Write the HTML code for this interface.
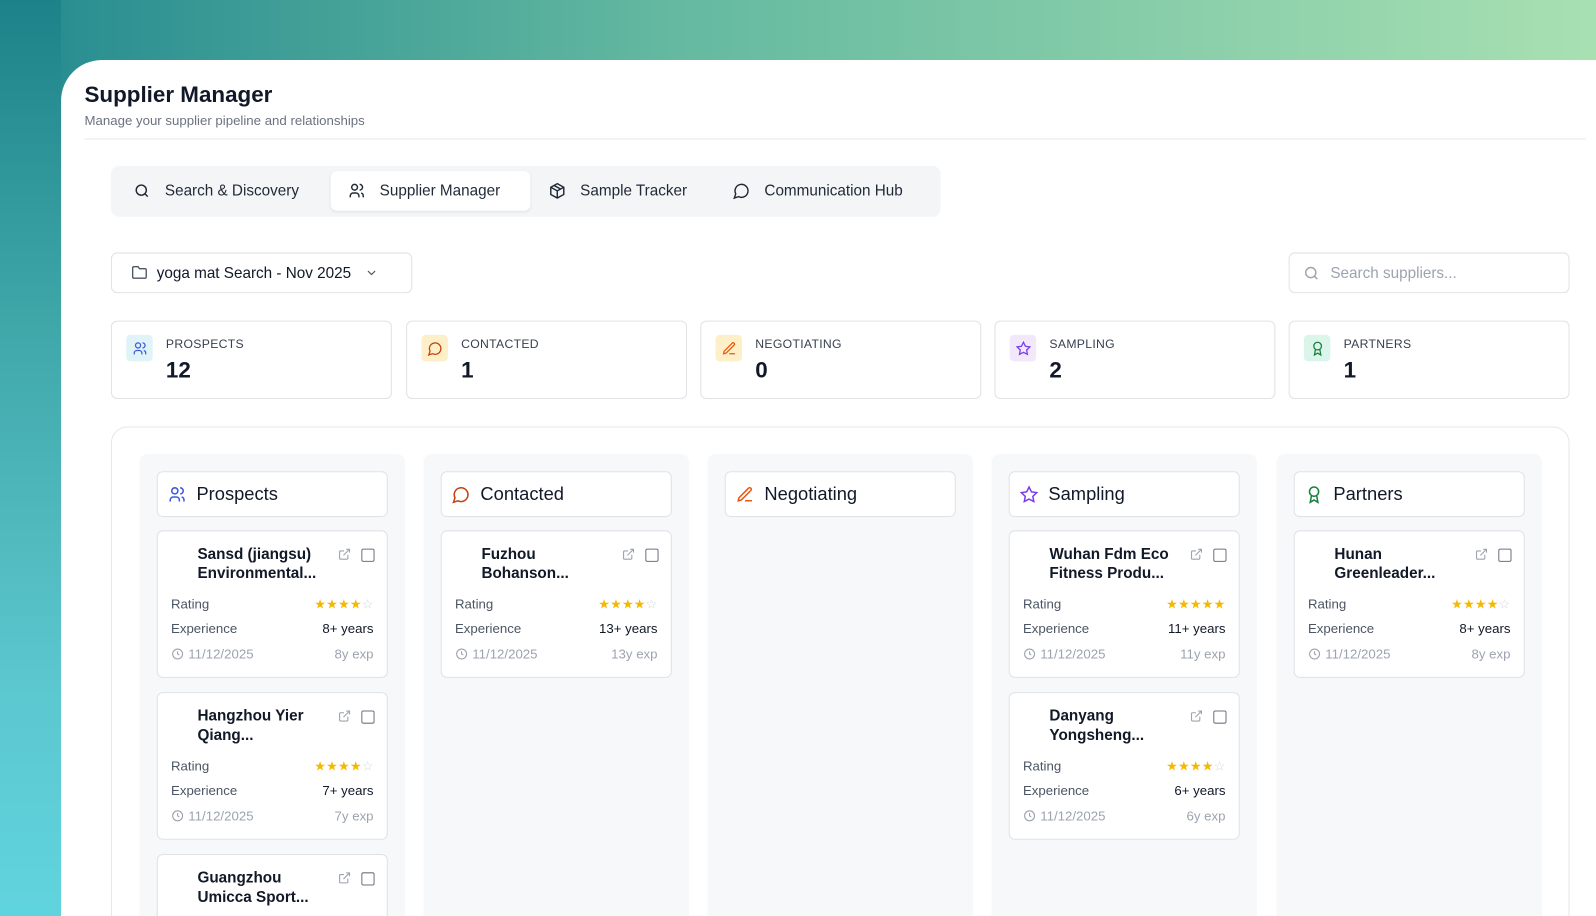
<!DOCTYPE html>
<html style="width:1596px;height:916px;overflow:hidden;background:#3fa7a8"><head><meta charset="utf-8"><style>
*{box-sizing:border-box;margin:0;padding:0}
body{width:1596px;height:916px;overflow:hidden;font-family:"Liberation Sans",sans-serif;color:#111827;
background:linear-gradient(180deg,#1d8289 0%,#3fa7a8 35%,#5cc7cf 75%,#60d4de 100%);position:relative}
#w{position:absolute;left:0;top:0;width:1568px;height:900px;transform:scale(1.01786);transform-origin:0 0}
.topg{position:absolute;left:60px;top:0;width:1508px;height:100px;background:linear-gradient(90deg,#2a8e91 0%,#64b9a0 40%,#a8e0b2 100%)}
.panel{position:absolute;left:60px;top:59px;width:1520px;height:900px;background:#fff;border-top-left-radius:40px}
.abs{position:absolute}
h1{position:absolute;left:83px;top:80px;font-size:22px;font-weight:700;color:#111827}
.sub{left:83px;top:111px;font-size:13px;color:#6b7280}
.div{left:83px;top:136px;width:1475px;height:1px;background:#e5e7eb}
.tabs{left:109px;top:163px;width:815px;height:50px;background:#f4f5f7;border-radius:8px}
.tab{position:absolute;top:5px;height:39px;display:flex;align-items:center;font-size:15px;color:#1f2937;gap:14px}
.tab.act{background:#fff;border-radius:6px;box-shadow:0 1px 3px rgba(0,0,0,.08)}
.box{border:1px solid #e0e2e6;border-radius:6px;background:#fff}
.stat{position:absolute;top:315px;width:276px;height:77px}
.stat .ic{position:absolute;left:14px;top:13px;width:26px;height:26px;border-radius:4px;display:flex;align-items:center;justify-content:center}
.stat .l{position:absolute;left:53px;top:15px;font-size:12px;color:#374151;letter-spacing:.3px}
.stat .n{position:absolute;left:53px;top:35px;font-size:22px;font-weight:700}
.board{left:109px;top:419px;width:1433px;height:520px;border:1px solid #e5e7eb;border-radius:16px}
.col{position:absolute;top:446px;width:261px;height:480px;background:#f7f8fa;border-radius:8px}
.ch{position:absolute;left:17px;top:17px;width:227px;height:45px;display:flex;align-items:center;padding-left:10px;gap:10px;font-size:18px;color:#111827}
.card{position:absolute;left:17px;width:227px;height:145px}
.nm{position:absolute;left:39px;top:13px;font-size:15px;font-weight:700;line-height:19px;width:140px}
.ext{position:absolute;left:177px;top:16px}
.cb{position:absolute;left:200px;top:17px;width:13px;height:13px;border:1.5px solid #6b7280;border-radius:2px}
.row{position:absolute;left:13px;right:13px;display:flex;justify-content:space-between;font-size:13px;color:#4b5563}
.row b{font-weight:400;color:#111827}
.r1{top:64px}.r2{top:88px}.r3{top:113px}
.stars{color:#f5b800;font-size:13px;letter-spacing:0px}
.stars i{font-style:normal;color:#d1d5db}
.g{color:#9ca3af;display:flex;align-items:center;gap:4px}
</style></head><body><div id="w">
<div class="topg"></div>
<div class="panel"></div>
<h1>Supplier Manager</h1>
<div class="abs sub">Manage your supplier pipeline and relationships</div>
<div class="abs div"></div>
<div class="abs tabs">
 <div class="tab" style="left:22px"><svg width="17" height="17" viewBox="0 0 24 24" fill="none" stroke="#1f2937" stroke-width="2"><circle cx="11" cy="11" r="7"/><path d="M20 20l-4-4"/></svg>Search &amp; Discovery</div>
 <div class="tab act" style="left:216px;width:196px;padding-left:17px"><svg width="17" height="17" viewBox="0 0 24 24" fill="none" stroke="#1f2937" stroke-width="2"><circle cx="9" cy="7" r="4"/><path d="M3 21v-2a4 4 0 014-4h4a4 4 0 014 4v2M16 3a4 4 0 010 8M21 21v-2a4 4 0 00-3-4"/></svg>Supplier Manager</div>
 <div class="tab" style="left:430px"><svg width="17" height="17" viewBox="0 0 24 24" fill="none" stroke="#1f2937" stroke-width="2"><path d="M12 2l9 5v10l-9 5-9-5V7z"/><path d="M3 7l9 5 9-5M12 12v10M7.5 4.5l9 5"/></svg>Sample Tracker</div>
 <div class="tab" style="left:611px"><svg width="17" height="17" viewBox="0 0 24 24" fill="none" stroke="#1f2937" stroke-width="2"><path d="M7.9 20A9 9 0 104 16.1L2 22z"/></svg>Communication Hub</div>
</div>
<div class="abs box" style="left:109px;top:248px;width:296px;height:40px;display:flex;align-items:center;padding-left:19px;gap:9px;font-size:15px">
 <svg width="16" height="16" viewBox="0 0 24 24" fill="none" stroke="#4b5563" stroke-width="2"><path d="M4 20h16a2 2 0 002-2V8a2 2 0 00-2-2h-8l-2-3H4a2 2 0 00-2 2v13a2 2 0 002 2z"/></svg>yoga mat Search - Nov 2025
 <svg width="14" height="14" viewBox="0 0 24 24" fill="none" stroke="#4b5563" stroke-width="2" style="margin-left:4px"><path d="M6 9l6 6 6-6"/></svg></div>
<div class="abs box" style="left:1266px;top:248px;width:276px;height:40px;display:flex;align-items:center;padding-left:13px;gap:10px;font-size:15px;color:#9ca3af">
 <svg width="17" height="17" viewBox="0 0 24 24" fill="none" stroke="#9ca3af" stroke-width="2"><circle cx="11" cy="11" r="7"/><path d="M20 20l-4-4"/></svg>Search suppliers...</div>

<div class="stat box" style="left:109px"><div class="ic" style="background:#dff3f8"><svg width="15" height="15" viewBox="0 0 24 24" fill="none" stroke="#3b5bdb" stroke-width="2"><circle cx="9" cy="7" r="4"/><path d="M3 21v-2a4 4 0 014-4h4a4 4 0 014 4v2M16 3a4 4 0 010 8M21 21v-2a4 4 0 00-3-4"/></svg></div><div class="l">PROSPECTS</div><div class="n">12</div></div>
<div class="stat box" style="left:399px"><div class="ic" style="background:#fdf0c8"><svg width="15" height="15" viewBox="0 0 24 24" fill="none" stroke="#c2410c" stroke-width="2"><path d="M7.9 20A9 9 0 104 16.1L2 22z"/></svg></div><div class="l">CONTACTED</div><div class="n">1</div></div>
<div class="stat box" style="left:688px"><div class="ic" style="background:#fdf0c8"><svg width="15" height="15" viewBox="0 0 24 24" fill="none" stroke="#ea580c" stroke-width="2"><path d="M12 20h9M16.5 3.5a2.1 2.1 0 013 3L7 19l-4 1 1-4z"/></svg></div><div class="l">NEGOTIATING</div><div class="n">0</div></div>
<div class="stat box" style="left:977px"><div class="ic" style="background:#f1e8fb"><svg width="15" height="15" viewBox="0 0 24 24" fill="none" stroke="#7c3aed" stroke-width="2"><path d="M12 2l3.1 6.3 6.9 1-5 4.9 1.2 6.8L12 17.8 5.8 21l1.2-6.8-5-4.9 6.9-1z"/></svg></div><div class="l">SAMPLING</div><div class="n">2</div></div>
<div class="stat box" style="left:1266px"><div class="ic" style="background:#dcf5ea"><svg width="15" height="15" viewBox="0 0 24 24" fill="none" stroke="#15803d" stroke-width="2"><circle cx="12" cy="8" r="6"/><path d="M15.5 13.5L17 22l-5-3-5 3 1.5-8.5"/></svg></div><div class="l">PARTNERS</div><div class="n">1</div></div>

<div class="abs board"></div>

<div class="col" style="left:137px">
 <div class="ch box"><svg width="18" height="18" viewBox="0 0 24 24" fill="none" stroke="#3b5bdb" stroke-width="2"><circle cx="9" cy="7" r="4"/><path d="M3 21v-2a4 4 0 014-4h4a4 4 0 014 4v2M16 3a4 4 0 010 8M21 21v-2a4 4 0 00-3-4"/></svg>Prospects</div>
 <div class="card box" style="top:75px"><div class="nm">Sansd (jiangsu) Environmental...</div><svg class="ext" width="13" height="13" viewBox="0 0 24 24" fill="none" stroke="#9ca3af" stroke-width="2"><path d="M18 13v6a2 2 0 01-2 2H5a2 2 0 01-2-2V8a2 2 0 012-2h6M15 3h6v6M10 14L21 3"/></svg><div class="cb"></div>
  <div class="row r1"><span>Rating</span><span class="stars">★★★★<i>☆</i></span></div><div class="row r2"><span>Experience</span><b>8+ years</b></div><div class="row r3"><span class="g"><svg width="13" height="13" viewBox="0 0 24 24" fill="none" stroke="#9ca3af" stroke-width="2"><circle cx="12" cy="12" r="9"/><path d="M12 7v5l3 2"/></svg>11/12/2025</span><span class="g">8y exp</span></div></div>
 <div class="card box" style="top:234px"><div class="nm">Hangzhou Yier Qiang...</div><svg class="ext" width="13" height="13" viewBox="0 0 24 24" fill="none" stroke="#9ca3af" stroke-width="2"><path d="M18 13v6a2 2 0 01-2 2H5a2 2 0 01-2-2V8a2 2 0 012-2h6M15 3h6v6M10 14L21 3"/></svg><div class="cb"></div>
  <div class="row r1"><span>Rating</span><span class="stars">★★★★<i>☆</i></span></div><div class="row r2"><span>Experience</span><b>7+ years</b></div><div class="row r3"><span class="g"><svg width="13" height="13" viewBox="0 0 24 24" fill="none" stroke="#9ca3af" stroke-width="2"><circle cx="12" cy="12" r="9"/><path d="M12 7v5l3 2"/></svg>11/12/2025</span><span class="g">7y exp</span></div></div>
 <div class="card box" style="top:393px"><div class="nm">Guangzhou Umicca Sport...</div><svg class="ext" width="13" height="13" viewBox="0 0 24 24" fill="none" stroke="#9ca3af" stroke-width="2"><path d="M18 13v6a2 2 0 01-2 2H5a2 2 0 01-2-2V8a2 2 0 012-2h6M15 3h6v6M10 14L21 3"/></svg><div class="cb"></div></div>
</div>

<div class="col" style="left:416px">
 <div class="ch box"><svg width="18" height="18" viewBox="0 0 24 24" fill="none" stroke="#c2410c" stroke-width="2"><path d="M7.9 20A9 9 0 104 16.1L2 22z"/></svg>Contacted</div>
 <div class="card box" style="top:75px"><div class="nm">Fuzhou Bohanson...</div><svg class="ext" width="13" height="13" viewBox="0 0 24 24" fill="none" stroke="#9ca3af" stroke-width="2"><path d="M18 13v6a2 2 0 01-2 2H5a2 2 0 01-2-2V8a2 2 0 012-2h6M15 3h6v6M10 14L21 3"/></svg><div class="cb"></div>
  <div class="row r1"><span>Rating</span><span class="stars">★★★★<i>☆</i></span></div><div class="row r2"><span>Experience</span><b>13+ years</b></div><div class="row r3"><span class="g"><svg width="13" height="13" viewBox="0 0 24 24" fill="none" stroke="#9ca3af" stroke-width="2"><circle cx="12" cy="12" r="9"/><path d="M12 7v5l3 2"/></svg>11/12/2025</span><span class="g">13y exp</span></div></div>
</div>

<div class="col" style="left:695px">
 <div class="ch box"><svg width="18" height="18" viewBox="0 0 24 24" fill="none" stroke="#ea580c" stroke-width="2"><path d="M12 20h9M16.5 3.5a2.1 2.1 0 013 3L7 19l-4 1 1-4z"/></svg>Negotiating</div>
</div>

<div class="col" style="left:974px">
 <div class="ch box"><svg width="18" height="18" viewBox="0 0 24 24" fill="none" stroke="#7c3aed" stroke-width="2"><path d="M12 2l3.1 6.3 6.9 1-5 4.9 1.2 6.8L12 17.8 5.8 21l1.2-6.8-5-4.9 6.9-1z"/></svg>Sampling</div>
 <div class="card box" style="top:75px"><div class="nm">Wuhan Fdm Eco Fitness Produ...</div><svg class="ext" width="13" height="13" viewBox="0 0 24 24" fill="none" stroke="#9ca3af" stroke-width="2"><path d="M18 13v6a2 2 0 01-2 2H5a2 2 0 01-2-2V8a2 2 0 012-2h6M15 3h6v6M10 14L21 3"/></svg><div class="cb"></div>
  <div class="row r1"><span>Rating</span><span class="stars">★★★★★</span></div><div class="row r2"><span>Experience</span><b>11+ years</b></div><div class="row r3"><span class="g"><svg width="13" height="13" viewBox="0 0 24 24" fill="none" stroke="#9ca3af" stroke-width="2"><circle cx="12" cy="12" r="9"/><path d="M12 7v5l3 2"/></svg>11/12/2025</span><span class="g">11y exp</span></div></div>
 <div class="card box" style="top:234px"><div class="nm">Danyang Yongsheng...</div><svg class="ext" width="13" height="13" viewBox="0 0 24 24" fill="none" stroke="#9ca3af" stroke-width="2"><path d="M18 13v6a2 2 0 01-2 2H5a2 2 0 01-2-2V8a2 2 0 012-2h6M15 3h6v6M10 14L21 3"/></svg><div class="cb"></div>
  <div class="row r1"><span>Rating</span><span class="stars">★★★★<i>☆</i></span></div><div class="row r2"><span>Experience</span><b>6+ years</b></div><div class="row r3"><span class="g"><svg width="13" height="13" viewBox="0 0 24 24" fill="none" stroke="#9ca3af" stroke-width="2"><circle cx="12" cy="12" r="9"/><path d="M12 7v5l3 2"/></svg>11/12/2025</span><span class="g">6y exp</span></div></div>
</div>

<div class="col" style="left:1254px">
 <div class="ch box"><svg width="18" height="18" viewBox="0 0 24 24" fill="none" stroke="#15803d" stroke-width="2"><circle cx="12" cy="8" r="6"/><path d="M15.5 13.5L17 22l-5-3-5 3 1.5-8.5"/></svg>Partners</div>
 <div class="card box" style="top:75px"><div class="nm">Hunan Greenleader...</div><svg class="ext" width="13" height="13" viewBox="0 0 24 24" fill="none" stroke="#9ca3af" stroke-width="2"><path d="M18 13v6a2 2 0 01-2 2H5a2 2 0 01-2-2V8a2 2 0 012-2h6M15 3h6v6M10 14L21 3"/></svg><div class="cb"></div>
  <div class="row r1"><span>Rating</span><span class="stars">★★★★<i>☆</i></span></div><div class="row r2"><span>Experience</span><b>8+ years</b></div><div class="row r3"><span class="g"><svg width="13" height="13" viewBox="0 0 24 24" fill="none" stroke="#9ca3af" stroke-width="2"><circle cx="12" cy="12" r="9"/><path d="M12 7v5l3 2"/></svg>11/12/2025</span><span class="g">8y exp</span></div></div>
</div>
</div></body></html>
